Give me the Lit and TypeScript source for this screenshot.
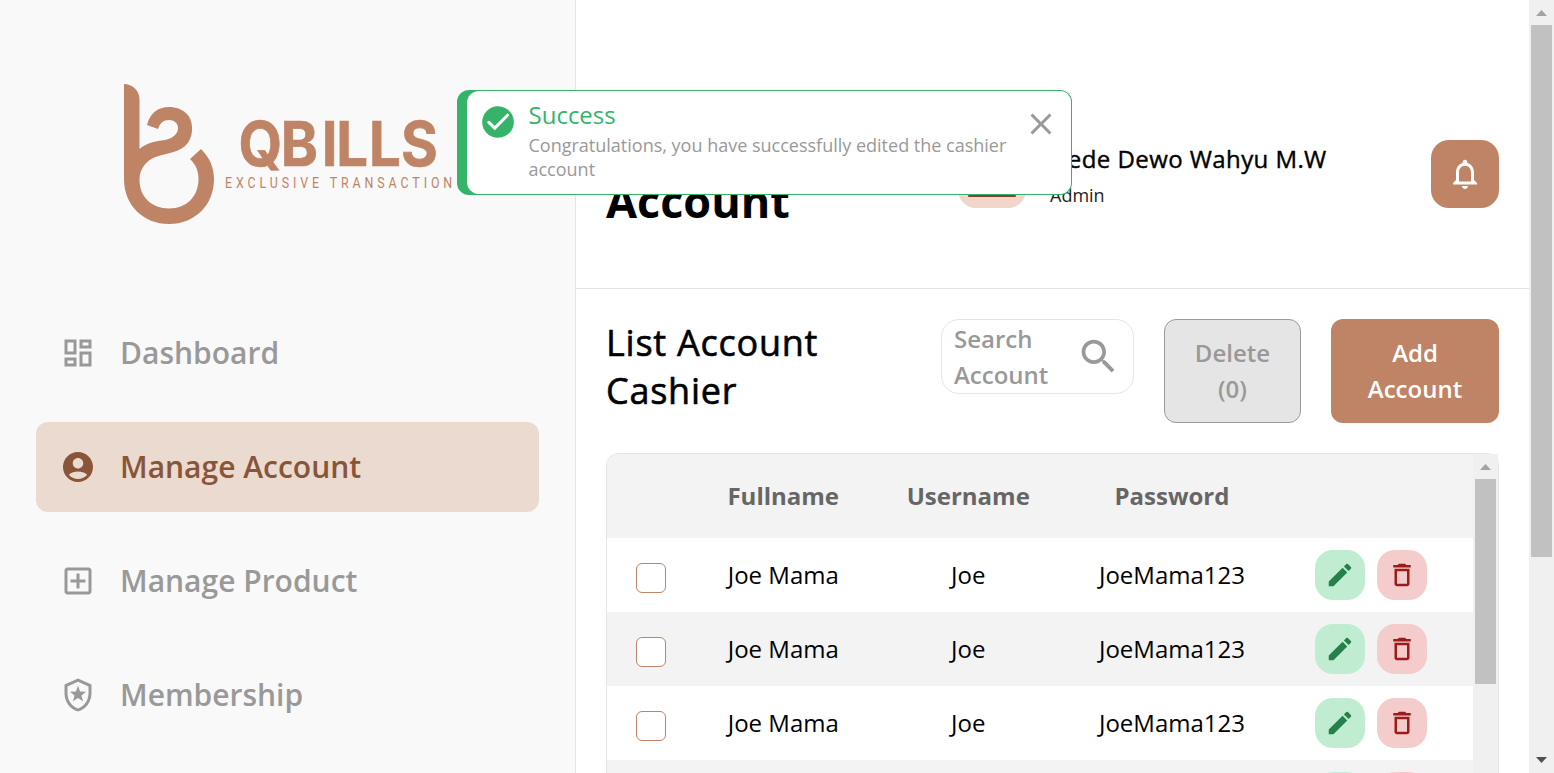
import { LitElement, html, css, svg } from "lit";
import { customElement, property } from "lit/decorators.js";

const icons = {
  dashboard: svg`<path d="M19 5v2h-4V5h4M9 5v6H5V5h4m10 8v6h-4v-6h4M9 17v2H5v-2h4M21 3h-8v6h8V3zM11 3H3v10h8V3zm10 8h-8v10h8V11zm-10 4H3v6h8v-6z"/>`,
  account: svg`<path d="M12 2C6.480 2 2 6.480 2 12s4.480 10 10 10 10-4.480 10-10S17.520 2 12 2zm0 4c1.930 0 3.500 1.570 3.500 3.500S13.930 13 12 13s-3.500-1.570-3.500-3.500S10.070 6 12 6zm0 14c-2.030 0-4.430-.820-6.140-2.880C7.550 15.800 9.680 15 12 15s4.450.800 6.140 2.120C16.430 19.180 14.030 20 12 20z"/>`,
  product: svg`<path d="M19 3H5c-1.110 0-2 .900-2 2v14c0 1.100.890 2 2 2h14c1.100 0 2-.900 2-2V5c0-1.100-.900-2-2-2zm0 16H5V5h14v14zm-8-2h2v-4h4v-2h-4V7h-2v4H7v2h4z"/>`,
  membership: svg`<path d="M12 1 3 5v6c0 5.550 3.840 10.740 9 12 5.160-1.260 9-6.450 9-12V5l-9-4zm7 10c0 4.520-2.980 8.690-7 9.930-4.020-1.240-7-5.410-7-9.930V6.300l7-3.110 7 3.110V11z"/><path d="M12 5.900 13.400 9.600 17.400 9.850 14.300 12.350 15.350 16.200 12 14 8.650 16.200 9.700 12.350 6.600 9.850 10.600 9.600z"/>`,
  bell: svg`<path d="M12 22c1.100 0 2-.900 2-2h-4c0 1.100.900 2 2 2zm6-6v-5c0-3.070-1.630-5.640-4.500-6.320V4c0-.830-.670-1.500-1.500-1.500s-1.500.670-1.500 1.500v.680C7.640 5.360 6 7.920 6 11v5l-2 2v1h16v-1l-2-2zm-2 1H8v-6c0-2.480 1.510-4.500 4-4.500s4 2.020 4 4.500v6z"/>`,
  search: svg`<path d="M15.500 14h-.790l-.280-.270C15.410 12.590 16 11.110 16 9.500 16 5.910 13.090 3 9.500 3S3 5.910 3 9.500 5.910 16 9.500 16c1.610 0 3.090-.590 4.230-1.570l.270.280v.790l5 4.990L20.490 19l-4.990-5zm-6 0C7.010 14 5 11.990 5 9.500S7.010 5 9.500 5 14 7.010 14 9.500 11.990 14 9.500 14z"/>`,
  edit: svg`<path d="M3 17.250V21h3.750L17.810 9.940l-3.750-3.750L3 17.250zM20.710 7.040c.390-.390.390-1.020 0-1.410l-2.340-2.340a.996.996 0 0 0-1.410 0l-1.830 1.830 3.750 3.750 1.830-1.830z"/>`,
  trash: svg`<path d="M6 19c0 1.100.900 2 2 2h8c1.100 0 2-.900 2-2V7H6v12zM8 9h8v10H8V9zm7.500-5-1-1h-5l-1 1H5v2h14V4z"/>`,
  check: svg`<path d="M12 2C6.480 2 2 6.480 2 12s4.480 10 10 10 10-4.480 10-10S17.520 2 12 2z"/><path d="M6.200 12.200 10 15.900 18 7.700" fill="none" stroke="#fff" stroke-width="1.900" stroke-linecap="round"/>`,
  close: svg`<path d="M19 6.410 17.590 5 12 10.590 6.410 5 5 6.410 10.590 12 5 17.590 6.410 19 12 13.410 17.590 19 19 17.590 13.410 12z"/>`,
};

@customElement("ui-icon")
class UiIcon extends LitElement {
  @property() name: keyof typeof icons = "check";
  static styles = css`
    :host { display: block; flex: none; width: 36px; height: 36px; }
    svg { display: block; width: 100%; height: 100%; fill: currentColor; }
  `;
  render() {
    return html`<svg viewBox="0 0 24 24">${icons[this.name]}</svg>`;
  }
}

@customElement("scroll-bar")
class ScrollBar extends LitElement {
  static styles = css`
    :host { display: flex; flex-direction: column; align-items: center; width: 25px; flex: none; background: #f0f0f0; }
    .cap { width: 25px; height: 25px; flex: none; display: block; }
    .track { flex: 1; width: 21px; }
    .thumb { width: 21px; height: var(--thumb, 100px); background: #c1c1c1; }
    .up { fill: #a3a3a3; }
    .down { fill: #505050; }
  `;
  render() {
    return html`
      <svg class="cap up" viewBox="0 0 25 25"><path d="M7 16h11l-5.500-6z" /></svg>
      <div class="track"><div class="thumb"></div></div>
      <svg class="cap down" viewBox="0 0 25 25"><path d="M7 9h11l-5.500 6z" /></svg>
    `;
  }
}

@customElement("app-root")
class AppRoot extends LitElement {
  static styles = css`
    :host {
      display: block; position: relative; height: 773px; overflow: hidden; background: #fff;
      font-family: "Open Sans", "Noto Sans", sans-serif; line-height: 1.5; color: #000;
    }
    * { box-sizing: border-box; }
    .page { display: flex; height: 773px; }
    .sidebar { width: 576px; flex: none; background: #f9f9f9; border-right: 1px solid #e5e5e5; }
    .logo { display: block; width: 360px; height: 160px; margin: 74px 0 0 110px; }
    .logo-name { font: 700 62.500px Inter, sans-serif; fill: #bf8465; stroke: #bf8465; stroke-width: .7px; }
    .logo-sub { font: 400 15.500px Roboto, sans-serif; fill: #bf8465; }
    .nav { display: flex; flex-direction: column; gap: 24px; padding: 74px 36px 0; }
    .item { display: flex; align-items: center; gap: 24px; height: 90px; padding-left: 24px; border-radius: 12px; color: #999; font-size: 30px; font-weight: 600; }
    .item span { margin-top: -1px; }
    .item.on { background: #ebdad0; color: #895539; }
    .main { flex: 1; min-width: 0; height: 773px; overflow: hidden; }
    .header { display: flex; align-items: center; height: 289px; border-bottom: 1px solid #e5e5e5; padding: 60px 30px 0 30px; }
    .title { width: 352px; flex: none; margin: 0; font-size: 45px; line-height: 54px; font-weight: 700; }
    .avatar { width: 68px; height: 68px; flex: none; border-radius: 18px; background: #f2d5cb; padding: 0 10px; display: flex; align-items: flex-end; }
    .avatar svg { display: block; width: 48px; height: 57px; margin-bottom: 11px; }
    .who { flex: 1; margin-left: 24px; padding-top: 2px; white-space: nowrap; }
    .name { font-size: 24px; font-weight: 400; line-height: 36px; letter-spacing: .420px; -webkit-text-stroke: .4px #000; }
    .role { font-size: 18px; font-weight: 400; line-height: 27px; margin-top: 5px; color: #222; }
    .bell { width: 68px; height: 68px; flex: none; border-radius: 18px; background: #bf8465; color: #fff; display: grid; place-items: center; }
    .tools { display: flex; align-items: flex-start; padding: 30px 30px 0 30px; height: 164px; }
    h2 { width: 335px; margin: 0; font-size: 36px; font-weight: 400; line-height: 48px; letter-spacing: .750px; -webkit-text-stroke: .6px #000; }
    .search { width: 193px; height: 75px; border: 1px solid #e5e5e5; border-radius: 18px; padding: 1px 12px 1px 12px; display: flex; align-items: center; justify-content: space-between; font-size: 24px; line-height: 36px; font-weight: 600; color: #999; }
    .search ui-icon { width: 45px; height: 45px; }
    .btn { height: 104px; margin-left: 30px; border-radius: 12px; display: grid; place-items: center; text-align: center; font-size: 24px; line-height: 36px; font-weight: 600; }
    .delete { width: 137px; background: #e5e5e5; border: 1px solid #999; color: #999; }
    .add { width: 168px; background: #bf8465; color: #fff; }
    .table { display: flex; height: 600px; margin: 0 30px; border: 1px solid #e5e5e5; border-radius: 12px; }
    .rows { flex: 1; min-width: 0; }
    .row { display: grid; grid-template-columns: 88px 176.500px 193.500px 214px 1fr; align-items: center; height: 74px; font-size: 24px; text-align: center; }
    .row:nth-child(odd) { background: #f3f3f3; }
    .row.head { height: 84px; font-weight: 700; color: #666; border-top-left-radius: 11px; }
    .box { width: 30px; height: 30px; margin: 5px 0 0 29px; border: 1px solid #bf8465; border-radius: 6px; background: #fff; }
    .acts { display: flex; gap: 12px; padding-left: 36px; }
    .act { width: 50px; height: 50px; border-radius: 18px; display: grid; place-items: center; }
    .act ui-icon { width: 30px; height: 30px; }
    .edit { background: #c0edd2; color: #268049; }
    .del { background: #f5cccc; color: #9e1b1b; }
    .table scroll-bar { --thumb: 205px; }
    .page > scroll-bar { --thumb: 532px; height: 773px; }
    .toast { position: absolute; left: 457px; top: 90px; width: 615px; height: 105px; border-radius: 12px; background: #35b469; border: 1px solid #35b469; border-left-width: 10px; z-index: 2; }
    .toast-in { display: flex; height: 103px; border-radius: 12px 11px 11px 12px; background: #fff; padding: 12px 8px 0 12px; }
    .toast .ok { width: 38px; height: 38px; color: #35b469; }
    .msg { width: 494px; margin: -1px 0 0 11.500px; }
    .ok-title { font-size: 24px; line-height: 26px; color: #35b469; font-weight: 400; }
    .desc { width: 490px; font-size: 18px; line-height: 24px; color: #999; margin-top: 5px; font-weight: 400; }
    .x { width: 36px; height: 36px; color: #999; margin: 3px 0 0 0; }
  `;

  private nav: [keyof typeof icons, string][] = [
    ["dashboard", "Dashboard"],
    ["account", "Manage Account"],
    ["product", "Manage Product"],
    ["membership", "Membership"],
  ];

  render() {
    return html`
      <div class="page">
        <aside class="sidebar">
          <svg class="logo" viewBox="110 74 360 160">
            <path fill="#bf8465" d="M124 84C132 84 139.500 90.500 139.500 99V149C144 145 150 142.500 158 141L165 140C173 138 178 134 178 128C178 123 174 120 169 120C163.500 120 160 123 158 129L147 125C150 113 158 107 169 107C183 107 192 116 192 127V131C191 144 182 150.500 170 153L162 155C148 158 139.500 167 139.500 180C139.500 197 152 208.500 169 208.500C187 208.500 198.500 196 198.500 179C198.500 171 196 165 190 159L201 149C210 158 214 168 214 179C214 205 195 224 169 224C143 224 124 205 124 179Z" />
            <text class="logo-name" transform="translate(238.500 166.300) scale(.9 1)" x="0 47 92.500 108.500 145 180.500" y="0">QBILLS</text>
            <text class="logo-sub" transform="translate(225 188) scale(.8 1)" x="0" y="0" textLength="284">EXCLUSIVE TRANSACTION</text>
          </svg>
          <nav class="nav">
            ${this.nav.map(([icon, label]) => html`
              <div class="item ${icon === "account" ? "on" : ""}"><ui-icon name=${icon}></ui-icon><span>${label}</span></div>`)}
          </nav>
        </aside>
        <main class="main">
          <header class="header">
            <h1 class="title">Manage<br />Account</h1>
            <div class="avatar">
              <svg viewBox="0 0 48 57"><circle cx="24" cy="22" r="13" fill="#9b5b45" /><path d="M0 57c2-14 12-20 24-20s22 6 24 20z" fill="#8a3f32" /></svg>
            </div>
            <div class="who"><div class="name">Gede Dewo Wahyu M.W</div><div class="role">Admin</div></div>
            <div class="bell"><ui-icon name="bell"></ui-icon></div>
          </header>
          <section class="tools">
            <h2>List Account<br />Cashier</h2>
            <div class="search"><span>Search<br />Account</span><ui-icon name="search"></ui-icon></div>
            <div class="btn delete"><span>Delete<br />(0)</span></div>
            <div class="btn add"><span>Add<br />Account</span></div>
          </section>
          <section class="table">
            <div class="rows">
              <div class="row head"><span></span><span>Fullname</span><span>Username</span><span>Password</span><span></span></div>
              ${[0, 1, 2, 3].map(() => html`
                <div class="row">
                  <div class="box"></div><span>Joe Mama</span><span>Joe</span><span>JoeMama123</span>
                  <div class="acts">
                    <div class="act edit"><ui-icon name="edit"></ui-icon></div>
                    <div class="act del"><ui-icon name="trash"></ui-icon></div>
                  </div>
                </div>`)}
            </div>
            <scroll-bar></scroll-bar>
          </section>
        </main>
        <scroll-bar></scroll-bar>
      </div>
      <div class="toast">
        <div class="toast-in">
          <ui-icon class="ok" name="check"></ui-icon>
          <div class="msg">
            <div class="ok-title">Success</div>
            <div class="desc">Congratulations, you have successfully edited the cashier account</div>
          </div>
          <ui-icon class="x" name="close"></ui-icon>
        </div>
      </div>
    `;
  }
}
